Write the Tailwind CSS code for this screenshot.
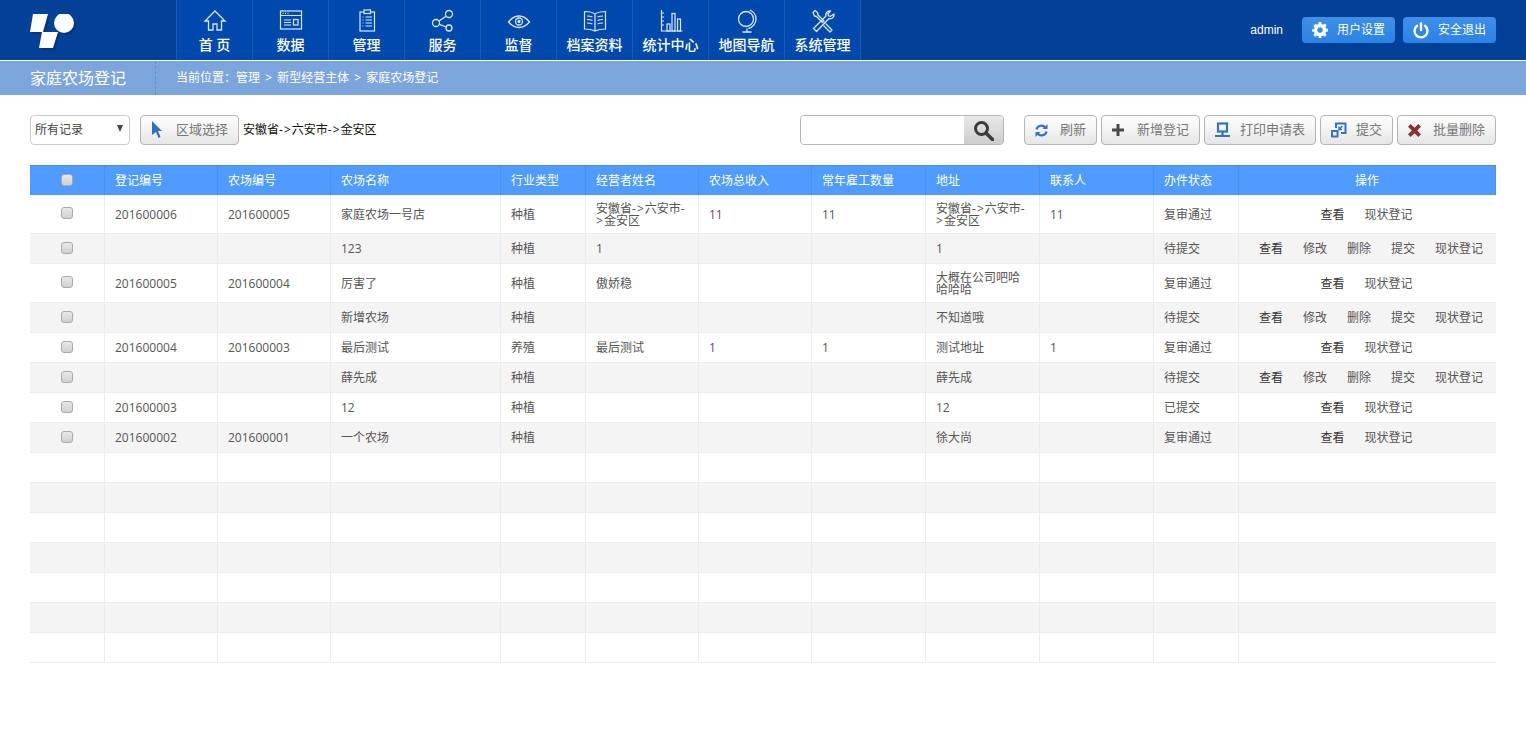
<!DOCTYPE html>
<html lang="zh">
<head>
<meta charset="utf-8">
<title>家庭农场登记</title>
<script src="https://cdn.jsdelivr.net/npm/@tailwindcss/browser@4"></script>
</head>
<body class="bg-white overflow-hidden text-[12px] text-[#555] font-['Open_Sans','Noto_Sans_CJK_SC',sans-serif]">
<div class="w-[1526px] h-[755px]">
<header class="h-[60px] bg-[#034098] flex items-stretch text-white">
  <div class="w-[176px] flex items-start pl-[30px] pt-[14px]">
    <svg width="50" height="36" viewBox="0 0 50 36">
      <g fill="#0a2a66" opacity=".55" transform="translate(2 2)"><path d="M3 0H18L13 18H0Z"/><path d="M12 18H28L23 34H9Z"/><circle cx="34" cy="9" r="10"/></g>
      <g fill="#fff"><path d="M3 0H18L13 18H0Z"/><path d="M12 18H28L23 34H9Z"/><circle cx="34" cy="9" r="10"/></g>
    </svg>
  </div>
  <nav class="flex border-l border-[#1d5bb3] text-[14px] font-medium">
    <a class="w-[76px] bg-[#0049ac] border-r border-[#1d5bb3] flex flex-col items-center pt-[9px]">
      <svg width="24" height="24" viewBox="0 0 24 24" fill="none" stroke="#dbe7f8" stroke-width="1.3"><path d="M12 2 2 12h3.500v9H10v-6h4v6h4.500v-9H22Z"/></svg>
      <span class="mt-[3px] leading-[18px]">首 页</span>
    </a>
    <a class="w-[76px] bg-[#0049ac] border-r border-[#1d5bb3] flex flex-col items-center pt-[9px]">
      <svg width="24" height="24" viewBox="0 0 24 24" fill="none" stroke="#dbe7f8" stroke-width="1.200"><rect x="1.500" y="2" width="21" height="18"/><path d="M1.500 6.500h21M5 11h7M5 13.500h7M5 16h7"/><rect x="14.500" y="10.500" width="4.500" height="5.500"/><path d="M3.500 4.300h1M6 4.300h1M8.500 4.300h1"/></svg>
      <span class="mt-[3px] leading-[18px]">数据</span>
    </a>
    <a class="w-[76px] bg-[#0049ac] border-r border-[#1d5bb3] flex flex-col items-center pt-[9px]">
      <svg width="24" height="24" viewBox="0 0 24 24" fill="none" stroke="#dbe7f8" stroke-width="1.200"><rect x="5" y="3" width="14.500" height="19"/><rect x="9" y="1" width="6.500" height="3.500" fill="#0049ac"/><path d="M7.500 8h1M10.500 8h6.500M7.500 11h1M10.500 11h6.500M7.500 14h1M10.500 14h6.500M7.500 17h1M10.500 17h6.500"/></svg>
      <span class="mt-[3px] leading-[18px]">管理</span>
    </a>
    <a class="w-[76px] bg-[#0049ac] border-r border-[#1d5bb3] flex flex-col items-center pt-[9px]">
      <svg width="24" height="24" viewBox="0 0 24 24" fill="none" stroke="#dbe7f8" stroke-width="1.300"><circle cx="18" cy="5" r="3.500"/><circle cx="5" cy="14" r="3.500"/><circle cx="18" cy="19" r="3"/><path d="M15 7.200 8 12M8.300 15.300l6.800 2.700"/></svg>
      <span class="mt-[3px] leading-[18px]">服务</span>
    </a>
    <a class="w-[76px] bg-[#0049ac] border-r border-[#1d5bb3] flex flex-col items-center pt-[9px]">
      <svg width="24" height="24" viewBox="0 0 24 24" fill="none" stroke="#dbe7f8" stroke-width="1.300"><path d="M1.500 13C5 8.500 8.500 7 12 7s7 1.500 10.500 6C19 17 15.500 18.500 12 18.500S5 17 1.500 13Z"/><circle cx="12" cy="12.500" r="3.500"/><circle cx="12" cy="12.500" r="1" fill="#dbe7f8"/></svg>
      <span class="mt-[3px] leading-[18px]">监督</span>
    </a>
    <a class="w-[76px] bg-[#0049ac] border-r border-[#1d5bb3] flex flex-col items-center pt-[9px]">
      <svg width="24" height="24" viewBox="0 0 24 24" fill="none" stroke="#dbe7f8" stroke-width="1.200"><path d="M12 5C9 3 5 2.500 1.500 2.500v17.500C5 20 9 20.500 12 22c3-1.500 7-2 10.500-2V2.500C19 2.500 15 3 12 5ZM12 5v17M4 7c2 0 4 .3 5.500 1M4 10.500c2 0 4 .3 5.500 1M4 14c2 0 4 .3 5.500 1M20 7c-2 0-4 .3-5.500 1M20 10.500c-2 0-4 .3-5.500 1M20 14c-2 0-4 .3-5.500 1"/></svg>
      <span class="mt-[3px] leading-[18px]">档案资料</span>
    </a>
    <a class="w-[76px] bg-[#0049ac] border-r border-[#1d5bb3] flex flex-col items-center pt-[9px]">
      <svg width="24" height="24" viewBox="0 0 24 24" fill="none" stroke="#dbe7f8" stroke-width="1.200"><path d="M2.500 1v21h21M2.500 4H5M2.500 8H5M2.500 12H5M2.500 16H5"/><rect x="8" y="15" width="3" height="7"/><rect x="13" y="4.500" width="3" height="17.500"/><rect x="18.500" y="10" width="3" height="12"/></svg>
      <span class="mt-[3px] leading-[18px]">统计中心</span>
    </a>
    <a class="w-[76px] bg-[#0049ac] border-r border-[#1d5bb3] flex flex-col items-center pt-[9px]">
      <svg width="24" height="24" viewBox="0 0 24 24" fill="none" stroke="#dbe7f8" stroke-width="1.300"><circle cx="11" cy="10" r="7.500"/><path d="M15 1c3.500 1.500 6 5 6 9s-3 8.500-7.500 9.500M12 19.500V23M7.500 23h9"/></svg>
      <span class="mt-[3px] leading-[18px]">地图导航</span>
    </a>
    <a class="w-[76px] bg-[#0049ac] border-r border-[#1d5bb3] flex flex-col items-center pt-[9px]">
      <svg width="24" height="24" viewBox="0 0 24 24" fill="none" stroke="#dbe7f8" stroke-width="1.300" stroke-linejoin="round"><path d="M2 3.500 4 1.500l2.500 2 .5 2.500 6 6-1.500 1.500-6-6L3.500 7ZM14.500 14.500l6.500 6.500-2 2-6.500-6.500"/><path d="M23 5c.3 2-.5 3.500-2 4.300-1 .5-2 .5-3 .2L5.500 22.500 2.500 19.500 15 7c-.3-1-.2-2.200.5-3.300C16.500 2.300 18 1.700 19.500 2l-2.500 2.800.5 2 2 .5Z"/></svg>
      <span class="mt-[3px] leading-[18px]">系统管理</span>
    </a>
  </nav>
  <div class="ml-auto flex items-center pr-[30px]">
    <span class="mr-[18px] -translate-x-px font-['Liberation_Sans','Noto_Sans_CJK_SC',sans-serif]">admin</span>
    <a class="w-[93px] h-[26px] rounded-[4px] bg-gradient-to-b from-[#3f8fe8] to-[#2a82e6] flex items-center pl-[10px] gap-[9px]">
      <svg width="16" height="16" viewBox="0 0 16 16"><path fill="#fff" fill-rule="evenodd" d="M6.700 0h2.600l.4 2.100 1.300.6L12.800 1.500l1.800 1.800-1.200 1.800.6 1.300 2 .4v2.600l-2 .4-.6 1.300 1.200 1.800-1.800 1.800-1.800-1.200-1.300.6-.4 2.100H6.700l-.4-2.100-1.300-.6-1.800 1.200-1.800-1.800 1.200-1.800-.6-1.300-2-.4V7.400l2-.4.6-1.300-1.200-1.800 1.800-1.800L5 2.700l1.300-.6ZM8 5.300a2.700 2.700 0 1 0 0 5.400 2.700 2.700 0 0 0 0-5.400Z"/></svg>
      <span>用户设置</span>
    </a>
    <a class="ml-[8px] w-[93px] h-[26px] rounded-[4px] bg-gradient-to-b from-[#3f8fe8] to-[#2a82e6] flex items-center pl-[10px] gap-[9px]">
      <svg width="16" height="17" viewBox="0 0 16 17" fill="none" stroke="#fff" stroke-width="2.400" stroke-linecap="round"><path d="M8 1.500v6.500M4 3.800a6.500 6.500 0 1 0 8 0"/></svg>
      <span>安全退出</span>
    </a>
  </div>
</header>
<div class="mt-px h-[34px] bg-[#7ca5dc] flex items-center text-white">
  <div class="w-[156px] h-full border-r border-dashed border-[#5f8fd0] pl-[30px] text-[16px] leading-[34px]">家庭农场登记</div>
  <div class="pl-[20px]">当前位置：管理<span class="mx-[2px]"> &gt; </span>新型经营主体<span class="mx-[2px]"> &gt; </span>家庭农场登记</div>
</div>

<main class="px-[30px]">
  <div class="h-[30px] mt-[20px] flex items-center">
    <div class="relative w-[100px] h-[30px]">
      <select class="w-full h-full appearance-none border border-[#ccc] rounded-[4px] bg-white pl-[4px] text-[#444]"><option>所有记录</option></select>
      <span class="absolute right-[7px] top-[10px] w-0 h-0 border-x-[3.5px] border-x-transparent border-t-[7px] border-t-[#444]"></span>
    </div>
    <a class="ml-[10px] w-[99px] h-[30px] flex items-center pl-[10px] gap-[13px] border border-[#b5b5b5] rounded-[4px] bg-gradient-to-b from-white to-[#e6e6e6] text-[#777] text-[13px]">
      <svg width="12" height="18" viewBox="0 0 12 18"><path fill="#2f6fc4" d="M1 0 11 10H7l2.500 6-2 1L5 11l-4 3Z"/></svg>
      <span>区域选择</span>
    </a>
    <span class="ml-[4px] text-[#111]">安徽省<span class="tracking-[1px]">-&gt;</span>六安市<span class="tracking-[1px]">-&gt;</span>金安区</span>
    <div class="ml-auto flex items-center">
      <div class="w-[204px] h-[30px] flex border border-[#b5b5b5] rounded-[4px] overflow-hidden">
        <input class="flex-1 min-w-0 bg-white" type="text">
        <span class="w-[39px] flex items-center justify-center bg-gradient-to-b from-[#e8e8e8] to-[#cfcdcb]">
          <svg width="21" height="21" viewBox="0 0 21 21" fill="none" stroke="#3c3c3c"><circle cx="8.500" cy="8.500" r="6" stroke-width="3"/><path d="M13 13l6.500 6.500" stroke-width="3.500" stroke-linecap="round"/></svg>
        </span>
      </div>
      <a class="ml-[20px] w-[73px] h-[30px] flex items-center pl-[10px] gap-[12px] border border-[#b5b5b5] rounded-[4px] bg-gradient-to-b from-white to-[#e6e6e6] text-[#777] text-[13px]">
        <svg width="13" height="13" viewBox="0 0 13 13" fill="none" stroke="#3273c6" stroke-width="2.200"><path d="M1.500 5.500A5 5 0 0 1 10.300 3.500"/><path d="M11.500 7.500A5 5 0 0 1 2.700 9.500"/><path fill="#3273c6" stroke="none" d="M12.500 0v5h-5ZM.5 13V8h5Z"/></svg>
        <span>刷新</span>
      </a>
      <a class="ml-[4px] w-[99px] h-[30px] flex items-center pl-[10px] gap-[13px] border border-[#b5b5b5] rounded-[4px] bg-gradient-to-b from-white to-[#e6e6e6] text-[#777] text-[13px]">
        <svg width="12" height="12" viewBox="0 0 12 12"><path fill="#4a4a4a" d="M4.500 0h3v4.500H12v3H7.500V12h-3V7.500H0v-3h4.500Z"/></svg>
        <span>新增登记</span>
      </a>
      <a class="ml-[4px] w-[112px] h-[30px] flex items-center pl-[10px] gap-[10px] border border-[#b5b5b5] rounded-[4px] bg-gradient-to-b from-white to-[#e6e6e6] text-[#777] text-[13px]">
        <svg width="15" height="16" viewBox="0 0 15 16" fill="none" stroke="#3273c6" stroke-width="2.200"><rect x="3" y="1.500" width="9" height="8"/><path d="M7.500 10v3.500M0 14h15" /></svg>
        <span>打印申请表</span>
      </a>
      <a class="ml-[4px] w-[73px] h-[30px] flex items-center pl-[10px] gap-[9px] border border-[#b5b5b5] rounded-[4px] bg-gradient-to-b from-white to-[#e6e6e6] text-[#777] text-[13px]">
        <svg width="16" height="16" viewBox="0 0 16 16" fill="none" stroke="#3273c6" stroke-width="2"><path d="M5 6V1.500h9.500V11H10"/><rect x="1" y="9" width="5.500" height="5.500"/><path d="M11.500 4 8 7.500M8 4.500v3h3" stroke-width="1.500"/></svg>
        <span>提交</span>
      </a>
      <a class="ml-[4px] w-[99px] h-[30px] flex items-center pl-[10px] gap-[12px] border border-[#b5b5b5] rounded-[4px] bg-gradient-to-b from-white to-[#e6e6e6] text-[#777] text-[13px]">
        <svg width="13" height="13" viewBox="0 0 13 13"><path fill="#8a3230" d="M2.700 0 6.500 3.800 10.300 0 13 2.700 9.200 6.500 13 10.300 10.300 13 6.500 9.200 2.700 13 0 10.300 3.800 6.500 0 2.700Z"/></svg>
        <span>批量删除</span>
      </a>
    </div>
  </div>

  <table class="mt-[20px] w-[1466px] table-fixed border-separate border-spacing-0 leading-[12px]">
    <colgroup>
      <col class="w-[75px]"><col class="w-[113px]"><col class="w-[113px]"><col class="w-[170px]"><col class="w-[85px]"><col class="w-[113px]"><col class="w-[113px]"><col class="w-[114px]"><col class="w-[114px]"><col class="w-[114px]"><col class="w-[85px]"><col class="w-[257px]">
    </colgroup>
    <thead>
      <tr class="h-[30px] bg-[#4f9bff] text-white text-left [&>th]:font-normal [&>th]:px-[10px] [&>th]:border-r [&>th]:border-t [&>th]:border-[#4a8fe8]">
        <th class="text-center"><input type="checkbox" class="appearance-none block mx-auto -mt-[2px] size-[12px] rounded-[3px] bg-gradient-to-b from-[#e8e8e8] to-[#d0d0d0] border border-[#aaa]"></th>
        <th>登记编号</th><th>农场编号</th><th>农场名称</th><th>行业类型</th><th>经营者姓名</th><th>农场总收入</th><th>常年雇工数量</th><th>地址</th><th>联系人</th><th>办件状态</th><th class="text-center">操作</th>
      </tr>
    </thead>
    <tbody class="[&_td]:border-b [&_td]:px-[10px] [&_td]:border-r [&_td]:border-[#ececec] [&_td:last-child]:border-r-0 [&>tr:nth-child(even)]:bg-[#f5f4f5]">
      <tr class="h-[39px] [&>td]:pt-[2px]">
        <td><input type="checkbox" class="appearance-none block mx-auto -mt-[5px] size-[12px] rounded-[3px] bg-gradient-to-b from-[#e8e8e8] to-[#d0d0d0] border border-[#aaa]"></td>
        <td>201600006</td><td>201600005</td><td>家庭农场一号店</td><td>种植</td><td>安徽省<span class="tracking-[1px]">-&gt;</span>六安市<span class="tracking-[1px]">-&gt;</span>金安区</td><td class="text-[#6b4478]">11</td><td>11</td><td>安徽省<span class="tracking-[1px]">-&gt;</span>六安市<span class="tracking-[1px]">-&gt;</span>金安区</td><td>11</td><td>复审通过</td>
        <td><div class="flex justify-center gap-[20px] pr-[2px]"><a class="text-[#333]">查看</a><a>现状登记</a></div></td>
      </tr>
      <tr class="h-[30px]">
        <td><input type="checkbox" class="appearance-none block mx-auto -mt-[1px] size-[12px] rounded-[3px] bg-gradient-to-b from-[#e8e8e8] to-[#d0d0d0] border border-[#aaa]"></td>
        <td></td><td></td><td>123</td><td>种植</td><td>1</td><td></td><td></td><td>1</td><td></td><td>待提交</td>
        <td><div class="flex justify-center gap-[20px] pl-[7px]"><a class="text-[#333]">查看</a><a>修改</a><a>删除</a><a>提交</a><a>现状登记</a></div></td>
      </tr>
      <tr class="h-[39px] [&>td]:pt-[2px]">
        <td><input type="checkbox" class="appearance-none block mx-auto -mt-[5px] size-[12px] rounded-[3px] bg-gradient-to-b from-[#e8e8e8] to-[#d0d0d0] border border-[#aaa]"></td>
        <td>201600005</td><td>201600004</td><td>厉害了</td><td>种植</td><td>傲娇稳</td><td></td><td></td><td>大概在公司吧哈哈哈哈</td><td></td><td>复审通过</td>
        <td><div class="flex justify-center gap-[20px] pr-[2px]"><a class="text-[#333]">查看</a><a>现状登记</a></div></td>
      </tr>
      <tr class="h-[30px]">
        <td><input type="checkbox" class="appearance-none block mx-auto -mt-[1px] size-[12px] rounded-[3px] bg-gradient-to-b from-[#e8e8e8] to-[#d0d0d0] border border-[#aaa]"></td>
        <td></td><td></td><td>新增农场</td><td>种植</td><td></td><td></td><td></td><td>不知道哦</td><td></td><td>待提交</td>
        <td><div class="flex justify-center gap-[20px] pl-[7px]"><a class="text-[#333]">查看</a><a>修改</a><a>删除</a><a>提交</a><a>现状登记</a></div></td>
      </tr>
      <tr class="h-[30px]">
        <td><input type="checkbox" class="appearance-none block mx-auto -mt-[1px] size-[12px] rounded-[3px] bg-gradient-to-b from-[#e8e8e8] to-[#d0d0d0] border border-[#aaa]"></td>
        <td>201600004</td><td>201600003</td><td>最后测试</td><td>养殖</td><td>最后测试</td><td class="text-[#6b4478]">1</td><td>1</td><td>测试地址</td><td>1</td><td>复审通过</td>
        <td><div class="flex justify-center gap-[20px] pr-[2px]"><a class="text-[#333]">查看</a><a>现状登记</a></div></td>
      </tr>
      <tr class="h-[30px]">
        <td><input type="checkbox" class="appearance-none block mx-auto -mt-[1px] size-[12px] rounded-[3px] bg-gradient-to-b from-[#e8e8e8] to-[#d0d0d0] border border-[#aaa]"></td>
        <td></td><td></td><td>薛先成</td><td>种植</td><td></td><td></td><td></td><td>薛先成</td><td></td><td>待提交</td>
        <td><div class="flex justify-center gap-[20px] pl-[7px]"><a class="text-[#333]">查看</a><a>修改</a><a>删除</a><a>提交</a><a>现状登记</a></div></td>
      </tr>
      <tr class="h-[30px]">
        <td><input type="checkbox" class="appearance-none block mx-auto -mt-[1px] size-[12px] rounded-[3px] bg-gradient-to-b from-[#e8e8e8] to-[#d0d0d0] border border-[#aaa]"></td>
        <td>201600003</td><td></td><td>12</td><td>种植</td><td></td><td></td><td></td><td>12</td><td></td><td>已提交</td>
        <td><div class="flex justify-center gap-[20px] pr-[2px]"><a class="text-[#333]">查看</a><a>现状登记</a></div></td>
      </tr>
      <tr class="h-[30px]">
        <td><input type="checkbox" class="appearance-none block mx-auto -mt-[1px] size-[12px] rounded-[3px] bg-gradient-to-b from-[#e8e8e8] to-[#d0d0d0] border border-[#aaa]"></td>
        <td>201600002</td><td>201600001</td><td>一个农场</td><td>种植</td><td></td><td></td><td></td><td>徐大尚</td><td></td><td>复审通过</td>
        <td><div class="flex justify-center gap-[20px] pr-[2px]"><a class="text-[#333]">查看</a><a>现状登记</a></div></td>
      </tr>
      <tr class="h-[30px]"><td></td><td></td><td></td><td></td><td></td><td></td><td></td><td></td><td></td><td></td><td></td><td></td></tr>
      <tr class="h-[30px]"><td></td><td></td><td></td><td></td><td></td><td></td><td></td><td></td><td></td><td></td><td></td><td></td></tr>
      <tr class="h-[30px]"><td></td><td></td><td></td><td></td><td></td><td></td><td></td><td></td><td></td><td></td><td></td><td></td></tr>
      <tr class="h-[30px]"><td></td><td></td><td></td><td></td><td></td><td></td><td></td><td></td><td></td><td></td><td></td><td></td></tr>
      <tr class="h-[30px]"><td></td><td></td><td></td><td></td><td></td><td></td><td></td><td></td><td></td><td></td><td></td><td></td></tr>
      <tr class="h-[30px]"><td></td><td></td><td></td><td></td><td></td><td></td><td></td><td></td><td></td><td></td><td></td><td></td></tr>
      <tr class="h-[30px]"><td></td><td></td><td></td><td></td><td></td><td></td><td></td><td></td><td></td><td></td><td></td><td></td></tr>
    </tbody>
  </table>
</main>
</div>
</body>
</html>
